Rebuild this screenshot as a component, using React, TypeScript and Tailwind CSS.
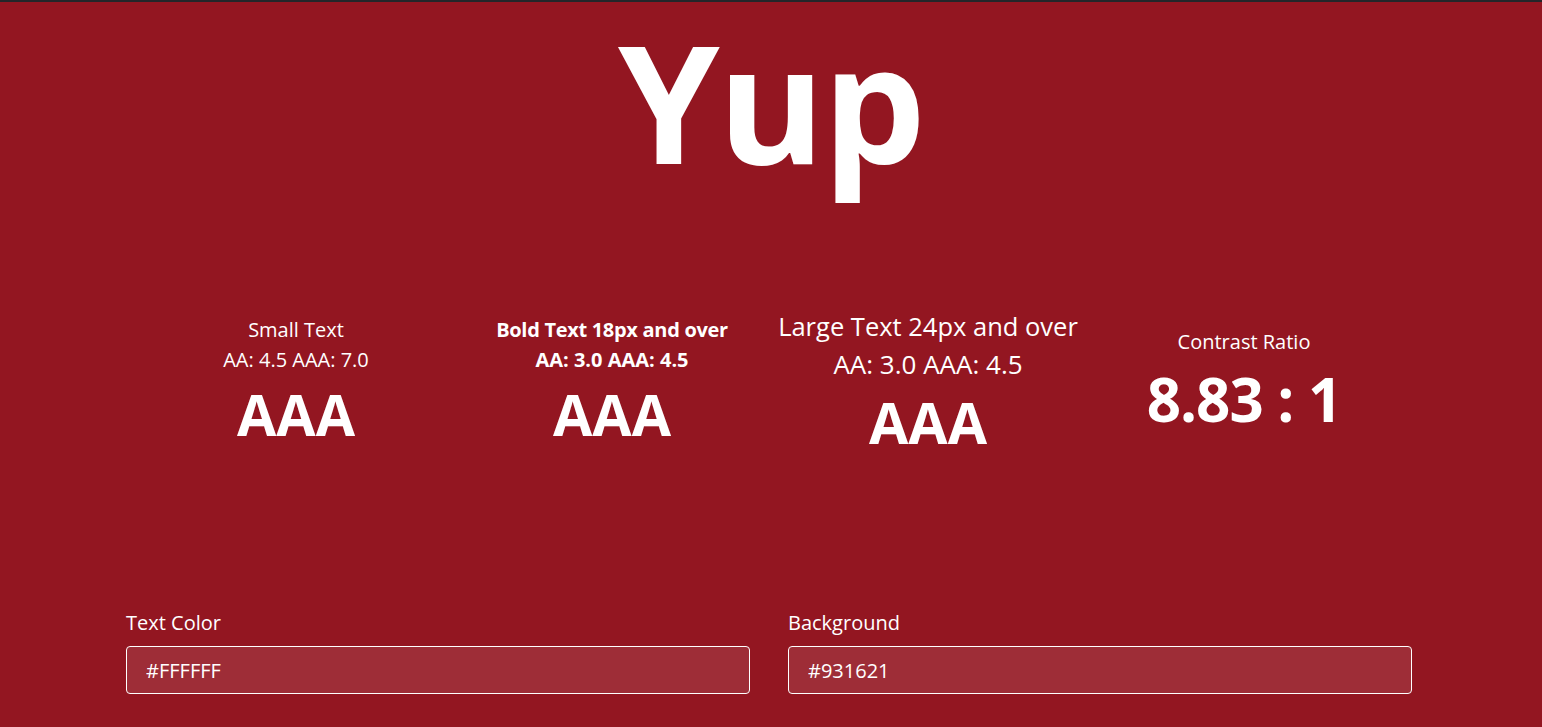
import React from 'react';

const font = { fontFamily: '"Open Sans", "Noto Sans", sans-serif' };

export default function App() {
  return (
    <div className="min-h-screen bg-[#931621] text-white" style={font}>
      <div className="h-[2px] bg-[#23262a]" />
      <h1 className="pt-[18px] text-center text-[163px] font-bold leading-none tracking-[-2px]">Yup</h1>

      <div className="ml-[138px] mt-[124px] grid w-[1264px] grid-cols-4 items-center text-center">
        <div>
          <p className="text-[20px] leading-[30px]">Small Text</p>
          <p className="text-[20px] leading-[30px]">AA: 4.5 AAA: 7.0</p>
          <p className="mt-[8px] text-[57px] font-bold leading-[62px]">AAA</p>
        </div>
        <div>
          <p className="text-[20px] font-bold leading-[30px] tracking-[-0.3px]">Bold Text 18px and over</p>
          <p className="text-[20px] font-bold leading-[30px]">AA: 3.0 AAA: 4.5</p>
          <p className="mt-[8px] text-[57px] font-bold leading-[62px]">AAA</p>
        </div>
        <div>
          <p className="text-[25.5px] leading-[38px]">Large Text 24px and over</p>
          <p className="text-[26px] leading-[38px]">AA: 3.0 AAA: 4.5</p>
          <p className="mt-[8px] text-[57px] font-bold leading-[62px]">AAA</p>
        </div>
        <div>
          <p className="text-[20px] leading-[30px]">Contrast Ratio</p>
          <p className="mt-[8px] text-[60px] font-bold leading-[68px] tracking-[-1px]">8.83 : 1</p>
        </div>
      </div>

      <div className="ml-[126px] mt-[157px] grid w-[1286px] grid-cols-2 gap-[38px]">
        <label className="flex flex-col gap-[10px]">
          <span className="text-[20px] leading-[26px]">Text Color</span>
          <input
            readOnly
            value="#FFFFFF"
            className="h-[48px] rounded-[4px] border border-white bg-white/10 px-[19px] text-[20px] text-white outline-none"
          />
        </label>
        <label className="flex flex-col gap-[10px]">
          <span className="text-[20px] leading-[26px]">Background</span>
          <input
            readOnly
            value="#931621"
            className="h-[48px] rounded-[4px] border border-white bg-white/10 px-[19px] text-[20px] text-white outline-none"
          />
        </label>
      </div>
    </div>
  );
}
